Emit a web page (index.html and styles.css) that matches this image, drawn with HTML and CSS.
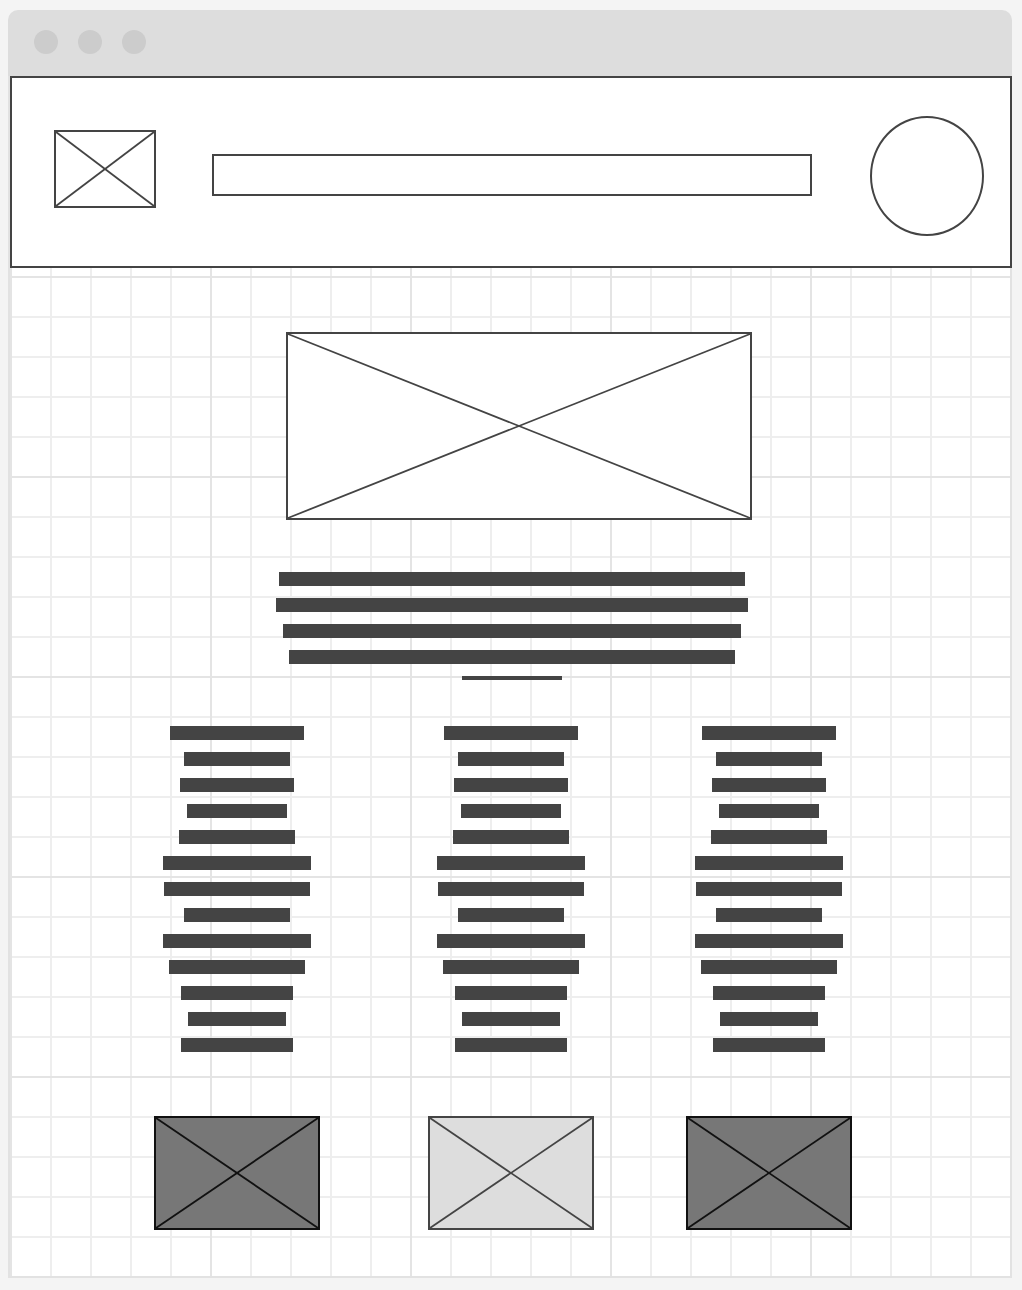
FILE: index.html
```html
<!DOCTYPE html>
<html lang="en">
<head>
<meta charset="utf-8">
<title>Wireframe</title>
<link rel="stylesheet" href="styles.css">
</head>
<body>
<div class="window">
  <div class="titlebar">
    <span class="dot"></span><span class="dot"></span><span class="dot"></span>
  </div>
  <div class="canvas">
    <header class="site-header">
      <div class="ph logo"><svg class="x"><line x1="0" y1="0" x2="100%" y2="100%"/><line x1="100%" y1="0" x2="0" y2="100%"/></svg></div>
      <div class="search"></div>
      <div class="avatar"></div>
    </header>

    <div class="ph hero"><svg class="x"><line x1="0" y1="0" x2="100%" y2="100%"/><line x1="100%" y1="0" x2="0" y2="100%"/></svg></div>

    <div class="intro">
      <div class="bar" style="width:466px"></div>
      <div class="bar" style="width:472px"></div>
      <div class="bar" style="width:458px"></div>
      <div class="bar" style="width:446px"></div>
      <div class="rule"></div>
    </div>

    <div class="columns">
      <div class="col">
        <div class="bar" style="width:134px"></div>
        <div class="bar" style="width:106px"></div>
        <div class="bar" style="width:114px"></div>
        <div class="bar" style="width:100px"></div>
        <div class="bar" style="width:116px"></div>
        <div class="bar" style="width:148px"></div>
        <div class="bar" style="width:146px"></div>
        <div class="bar" style="width:106px"></div>
        <div class="bar" style="width:148px"></div>
        <div class="bar" style="width:136px"></div>
        <div class="bar" style="width:112px"></div>
        <div class="bar" style="width:98px"></div>
        <div class="bar" style="width:112px"></div>
        <div class="ph thumb dark"><svg class="x"><line x1="0" y1="0" x2="100%" y2="100%"/><line x1="100%" y1="0" x2="0" y2="100%"/></svg></div>
      </div>
      <div class="col">
        <div class="bar" style="width:134px"></div>
        <div class="bar" style="width:106px"></div>
        <div class="bar" style="width:114px"></div>
        <div class="bar" style="width:100px"></div>
        <div class="bar" style="width:116px"></div>
        <div class="bar" style="width:148px"></div>
        <div class="bar" style="width:146px"></div>
        <div class="bar" style="width:106px"></div>
        <div class="bar" style="width:148px"></div>
        <div class="bar" style="width:136px"></div>
        <div class="bar" style="width:112px"></div>
        <div class="bar" style="width:98px"></div>
        <div class="bar" style="width:112px"></div>
        <div class="ph thumb light"><svg class="x"><line x1="0" y1="0" x2="100%" y2="100%"/><line x1="100%" y1="0" x2="0" y2="100%"/></svg></div>
      </div>
      <div class="col">
        <div class="bar" style="width:134px"></div>
        <div class="bar" style="width:106px"></div>
        <div class="bar" style="width:114px"></div>
        <div class="bar" style="width:100px"></div>
        <div class="bar" style="width:116px"></div>
        <div class="bar" style="width:148px"></div>
        <div class="bar" style="width:146px"></div>
        <div class="bar" style="width:106px"></div>
        <div class="bar" style="width:148px"></div>
        <div class="bar" style="width:136px"></div>
        <div class="bar" style="width:112px"></div>
        <div class="bar" style="width:98px"></div>
        <div class="bar" style="width:112px"></div>
        <div class="ph thumb dark"><svg class="x"><line x1="0" y1="0" x2="100%" y2="100%"/><line x1="100%" y1="0" x2="0" y2="100%"/></svg></div>
      </div>
    </div>
  </div>
</div>
</body>
</html>
```

FILE: styles.css
```css
* { box-sizing: border-box; }

html, body {
  margin: 0;
  padding: 0;
  background: #f4f4f4;
  font-family: "Liberation Sans", Arial, sans-serif;
}

.window {
  width: 1004px;
  margin: 10px 0 0 8px;
}

.titlebar {
  height: 66px;
  background: #dddddd;
  border-radius: 10px 10px 0 0;
  display: flex;
  align-items: flex-start;
  gap: 20px;
  padding: 20px 0 0 26px;
}

.dot {
  width: 24px;
  height: 24px;
  border-radius: 50%;
  background: #cccccc;
}

.canvas {
  height: 1202px;
  border: 2px solid #e2e2e2;
  border-top: 0;
  background-color: #ffffff;
  background-image:
    linear-gradient(to right, #e4e4e4 2px, transparent 2px),
    linear-gradient(to bottom, #e4e4e4 2px, transparent 2px),
    linear-gradient(to right, #eeeeee 2px, transparent 2px),
    linear-gradient(to bottom, #eeeeee 2px, transparent 2px);
  background-size: 200px 200px, 200px 200px, 40px 40px, 40px 40px;
  background-position: 0 0;
}

.ph {
  border: 2px solid #444444;
  background: #ffffff;
}

.x {
  display: block;
  width: 100%;
  height: 100%;
  overflow: visible;
}

.x line {
  stroke: #444444;
  stroke-width: 1.8;
}

.site-header {
  height: 192px;
  margin-right: -2px;
  border: 2px solid #444444;
  background: #ffffff;
  display: flex;
  align-items: flex-start;
  padding-left: 42px;
}

.logo {
  width: 102px;
  height: 78px;
  margin-top: 52px;
}

.search {
  width: 600px;
  height: 42px;
  margin: 76px 0 0 56px;
  border: 2px solid #444444;
}

.avatar {
  width: 114px;
  height: 120px;
  margin: 38px 0 0 58px;
  border: 2px solid #444444;
  border-radius: 50%;
}

.hero {
  width: 466px;
  height: 188px;
  margin: 64px 0 0 276px;
}

.intro {
  margin-top: 52px;
  padding-left: 4px;
  display: flex;
  flex-direction: column;
  align-items: center;
  gap: 12px;
}

.bar {
  height: 14px;
  background: #444444;
}

.rule {
  width: 100px;
  height: 4px;
  background: #444444;
}

.columns {
  margin-top: 46px;
  padding-left: 144px;
  display: flex;
  align-items: flex-start;
}

.col {
  width: 166px;
  display: flex;
  flex-direction: column;
  align-items: center;
  gap: 12px;
}

.col:nth-child(2) { margin-left: 108px; }
.col:nth-child(3) { margin-left: 92px; }

.thumb {
  width: 166px;
  height: 114px;
  margin-top: 52px;
}

.thumb.dark {
  background: #777777;
  border-color: #111111;
}

.thumb.dark .x line { stroke: #111111; }

.thumb.light {
  background: #dddddd;
  border-color: #444444;
}
```
